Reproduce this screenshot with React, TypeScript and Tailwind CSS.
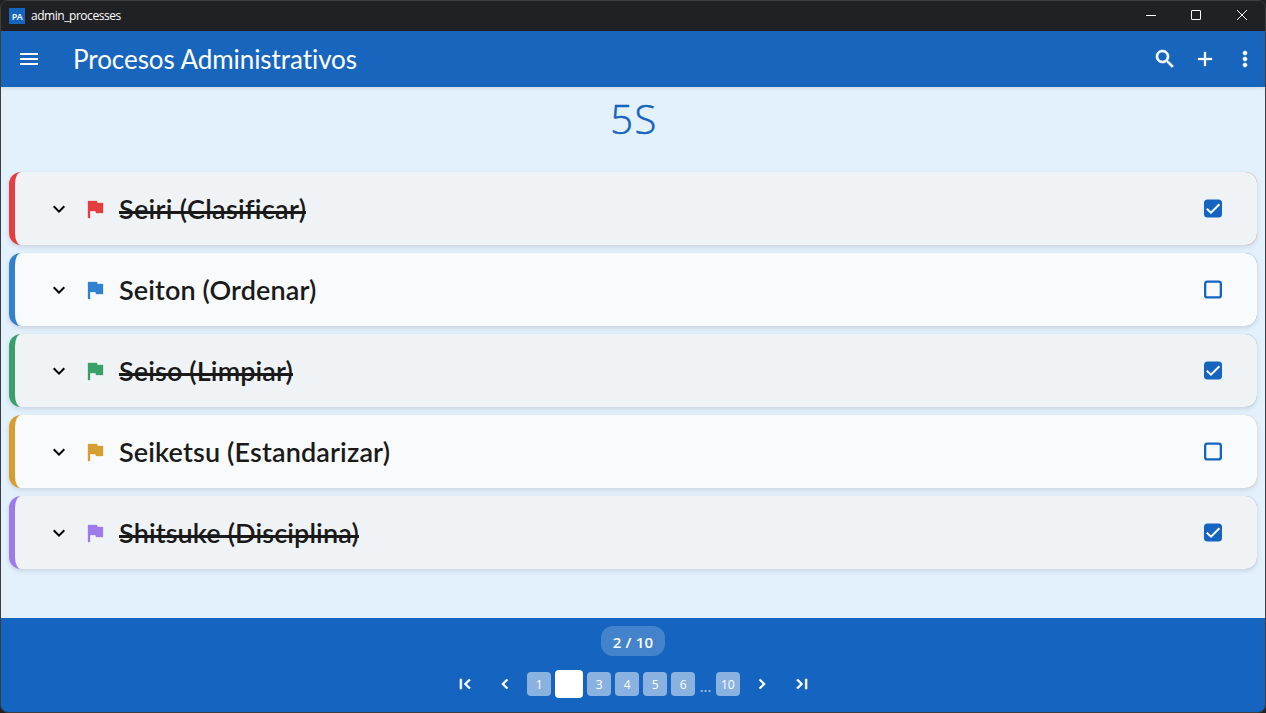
import type { ReactNode } from "react";
import { MdMenu, MdExpandMore } from "react-icons/md";

const steps = [
  { name: "Seiri (Clasificar)", bg: "bg-[#e53e3e]", fg: "text-[#e53e3e]", gap: "tracking-[0.3px]", done: true },
  { name: "Seiton (Ordenar)", bg: "bg-[#3182ce]", fg: "text-[#3182ce]", gap: "tracking-[0.12px]", done: false },
  { name: "Seiso (Limpiar)", bg: "bg-[#38a169]", fg: "text-[#38a169]", gap: "tracking-[0.12px]", done: true },
  { name: "Seiketsu (Estandarizar)", bg: "bg-[#d69e2e]", fg: "text-[#d69e2e]", gap: "tracking-[0.14px]", done: false },
  { name: "Shitsuke (Disciplina)", bg: "bg-[#9f7aea]", fg: "text-[#9f7aea]", gap: "tracking-[0.12px]", done: true },
];

function Glyph({ size, d, weight = 0, className = "" }: { size: number; d: string; weight?: number; className?: string }) {
  return (
    <svg width={size} height={size} viewBox="0 0 24 24" fill="currentColor" stroke="currentColor" strokeWidth={weight} className={className}>
      <path d={d} />
    </svg>
  );
}

const SEARCH =
  "M15.5 14h-.79l-.28-.27C15.41 12.59 16 11.11 16 9.5 16 5.91 13.09 3 9.5 3S3 5.91 3 9.5 5.91 16 9.5 16c1.61 0 3.09-.59 4.23-1.57l.27.28v.79l5 4.99L20.49 19l-4.99-5zm-6 0C7.01 14 5 11.99 5 9.5S7.01 5 9.5 5 14 7.01 14 9.5 11.99 14 9.5 14z";
const ADD = "M19 13h-6v6h-2v-6H5v-2h6V5h2v6h6v2z";
const MORE =
  "M12 8c1.1 0 2-.9 2-2s-.9-2-2-2-2 .9-2 2 .9 2 2 2zm0 2c-1.1 0-2 .9-2 2s.9 2 2 2 2-.9 2-2-.9-2-2-2zm0 6c-1.1 0-2 .9-2 2s.9 2 2 2 2-.9 2-2-.9-2-2-2z";
const FLAG = "M14.4 6L14 4H5v17h2v-7h5.6l.4 2h7V6z";
const FIRST = "M18.41 16.59L13.82 12l4.59-4.59L17 6l-6 6 6 6zM6 6h2v12H6z";
const LAST = "M5.59 7.41L10.18 12l-4.59 4.59L7 18l6-6-6-6zM16 6h2v12h-2z";
const LEFT = "M15.41 7.41L14 6l-6 6 6 6 1.41-1.41L10.83 12z";
const RIGHT = "M10 6L8.59 7.41 13.17 12l-4.58 4.59L10 18l6-6z";

function TitleBar() {
  return (
    <div className="flex h-[30px] items-center bg-[#202124] pl-2 font-['Open_Sans',sans-serif] text-white">
      <div className="flex h-4 w-4 items-center justify-center bg-[#1565c0] text-[9px] font-semibold leading-none tracking-[-0.4px]">PA</div>
      <span className="ml-1.5 text-[12px] leading-4 tracking-[-0.46px] whitespace-nowrap">admin_processes</span>
      <svg className="ml-auto" width="138" height="30" fill="none" stroke="white">
        <path d="M19 14.5h10" />
        <rect x="64.5" y="9.5" width="9" height="9" rx="0.5" />
        <path d="M110 9l10 10M120 9l-10 10" />
      </svg>
    </div>
  );
}

function AppBar() {
  return (
    <header className="z-10 flex h-14 items-center bg-[#1865bd] pl-4 pr-2 text-white shadow-[0_1px_4px_rgba(0,0,0,0.1)]">
      <MdMenu size={24} />
      <h1 className="ml-8 whitespace-nowrap font-['Lato',sans-serif] text-[26px] leading-8 tracking-[-0.06px]">
        Procesos Administrativos
      </h1>
      <div className="ml-auto flex items-center gap-4">
        <Glyph size={24} d={SEARCH} weight={0.6} />
        <Glyph size={24} d={ADD} weight={0.3} />
        <Glyph size={24} d={MORE} weight={0.6} />
      </div>
    </header>
  );
}

function Check({ on }: { on: boolean }) {
  return (
    <svg width="18" height="19" viewBox="0 -0.5 18 19" fill="none">
      {on ? (
        <>
          <rect width="18" height="18" rx="3.5" fill="#1565c0" />
          <path d="M2.8 9.2L7 13.2L15.4 4.8" stroke="white" strokeWidth="2" />
        </>
      ) : (
        <rect x="1.15" y="1.15" width="15.7" height="15.7" rx="2.2" stroke="#1565c0" strokeWidth="2.3" />
      )}
    </svg>
  );
}

function StepCard({ step }: { step: (typeof steps)[number] }) {
  return (
    <li className={`h-[73px] rounded-xl pl-1.5 shadow-[0_2px_5px_rgba(0,0,0,0.12)] ${step.bg}`}>
      <div
        className={`flex h-full items-center rounded-[6px_12px_12px_6px/12px] pl-8 pr-[35px] ${
          step.done ? "bg-[#f0f3f6]" : "bg-[#f8fafc]"
        }`}
      >
        <MdExpandMore size={24} className="text-black" />
        <Glyph size={24} d={FLAG} weight={0.3} className={`ml-3 ${step.fg}`} />
        <span
          className={`relative ml-3 pt-px font-['Lato',sans-serif] text-[27px] font-semibold leading-8 whitespace-nowrap text-[#1a1a1a] ${step.gap} ${
            step.done ? "after:absolute after:inset-x-0 after:top-[19px] after:h-[3px] after:bg-[#1a1a1a] after:content-['']" : ""
          }`}
        >
          {step.name}
        </span>
        <span className="ml-auto">
          <Check on={step.done} />
        </span>
      </div>
    </li>
  );
}

function Page({ n }: { n: number }) {
  return (
    <span className="flex h-6 w-6 items-center justify-center rounded-[4px] bg-white/50 pt-px text-[12px] leading-4 text-white">{n}</span>
  );
}

function NavSlot({ children }: { children: ReactNode }) {
  return <span className="flex w-9 justify-center">{children}</span>;
}

function Footer() {
  return (
    <footer className="flex h-[94px] flex-col items-center bg-[#1565c0] pt-2 font-['Open_Sans',sans-serif] text-white">
      <div className="flex h-[30px] w-16 items-center justify-center rounded-xl bg-white/20 pt-0.5 text-[15px] font-semibold leading-5 tracking-[0.2px] whitespace-nowrap">
        2 / 10
      </div>
      <nav className="mt-3.5 ml-px flex h-7 items-center gap-1">
        <NavSlot><Glyph size={20} d={FIRST} weight={0.8} /></NavSlot>
        <NavSlot><Glyph size={20} d={LEFT} weight={0.8} /></NavSlot>
        <Page n={1} />
        <span className="h-7 w-7 rounded-[4px] bg-white" />
        <Page n={3} />
        <Page n={4} />
        <Page n={5} />
        <Page n={6} />
        <span className="w-[12.5px] pt-1.5 text-center text-[14px] font-semibold leading-4 text-white/60">...</span>
        <Page n={10} />
        <NavSlot><Glyph size={20} d={RIGHT} weight={0.8} /></NavSlot>
        <NavSlot><Glyph size={20} d={LAST} weight={0.8} /></NavSlot>
      </nav>
    </footer>
  );
}

export default function App() {
  return (
    <div className="h-[713px] w-[1266px] overflow-hidden bg-[#202124]">
      <div className="flex h-full flex-col overflow-hidden rounded-lg border border-[#3c3d40]">
        <TitleBar />
        <AppBar />
        <main className="flex-1 bg-[#e3f1fd] px-2">
          <h2 className="flex h-[85px] items-start justify-center pt-[5px] pl-0.5 font-['Open_Sans',sans-serif] text-[40px] font-light leading-[54px] tracking-[1.5px] text-[#1565c0] [-webkit-text-stroke:0.5px_#1565c0]">
            5S
          </h2>
          <ul className="flex flex-col gap-2">
            {steps.map((s) => (
              <StepCard key={s.name} step={s} />
            ))}
          </ul>
        </main>
        <Footer />
      </div>
    </div>
  );
}
